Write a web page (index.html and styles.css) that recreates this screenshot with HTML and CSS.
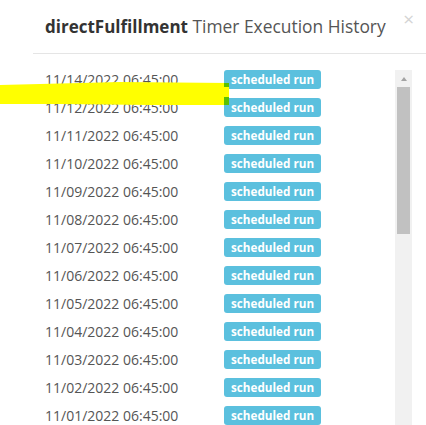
FILE: index.html
```html
<!DOCTYPE html>
<html lang="en">
<head>
    <meta charset="UTF-8">
    <meta name="viewport" content="width=device-width, initial-scale=1.0">
    <title>Timer Execution History</title>
    <link rel="stylesheet" href="styles.css">
</head>
<body>

    <div class="modal">
        <div class="modal-header">
            <h4 class="modal-title"><strong>directFulfillment</strong> Timer Execution History</h4>
            <span class="close">&times;</span>
        </div>

        <div class="modal-body">
            <div class="history">
                <div class="row"><span class="run-date">11/14/2022 06:45:00</span><span class="label">scheduled run</span></div>
                <div class="row"><span class="run-date">11/12/2022 06:45:00</span><span class="label">scheduled run</span></div>
                <div class="row"><span class="run-date">11/11/2022 06:45:00</span><span class="label">scheduled run</span></div>
                <div class="row"><span class="run-date">11/10/2022 06:45:00</span><span class="label">scheduled run</span></div>
                <div class="row"><span class="run-date">11/09/2022 06:45:00</span><span class="label">scheduled run</span></div>
                <div class="row"><span class="run-date">11/08/2022 06:45:00</span><span class="label">scheduled run</span></div>
                <div class="row"><span class="run-date">11/07/2022 06:45:00</span><span class="label">scheduled run</span></div>
                <div class="row"><span class="run-date">11/06/2022 06:45:00</span><span class="label">scheduled run</span></div>
                <div class="row"><span class="run-date">11/05/2022 06:45:00</span><span class="label">scheduled run</span></div>
                <div class="row"><span class="run-date">11/04/2022 06:45:00</span><span class="label">scheduled run</span></div>
                <div class="row"><span class="run-date">11/03/2022 06:45:00</span><span class="label">scheduled run</span></div>
                <div class="row"><span class="run-date">11/02/2022 06:45:00</span><span class="label">scheduled run</span></div>
                <div class="row"><span class="run-date">11/01/2022 06:45:00</span><span class="label">scheduled run</span></div>
            </div>
            <div class="scrollbar">
                <div class="scroll-up"><span class="arrow"></span></div>
                <div class="scroll-thumb"></div>
            </div>
        </div>
    </div>

    <!-- highlighter mark over the screenshot -->
    <svg class="marker" width="232" height="110" viewBox="0 0 232 110">
        <polygon points="0,85 40,84 120,82 229,83 229,105 150,105 60,104 0,104" fill="#ffff00"/>
        <rect x="224" y="83" width="5" height="4" fill="#5bc000"/>
        <rect x="224" y="97" width="5" height="8" fill="#5bc000"/>
    </svg>

</body>
</html>
```

FILE: styles.css
```css
:root {
    --text-color: #555;
    --title-color: #333;
    --border-color: #e5e5e5;
    --label-color: #5bc0de;
}
body {
    font-family: "Open Sans", "Liberation Sans", Arial, sans-serif;
    background-color: #fff;
    color: var(--text-color);
    margin: 0;
    height: 425px;
    overflow: hidden;
    position: relative;
}
.modal {
    margin-left: 33px;
}
.modal-header {
    display: flex;
    justify-content: space-between;
    padding: 16px 12px 16px 12px;
    border-bottom: 1px solid var(--border-color);
}
.modal-title {
    margin: 0;
    font-size: 17.4px;
    font-weight: 400;
    line-height: 20px;
    white-space: nowrap;
    color: #555;
}
.modal-title strong {
    font-size: 17px;
    color: var(--title-color);
    font-weight: 700;
}
.close {
    align-self: flex-start;
    margin-top: -6px;
    font-size: 19px;
    line-height: 1;
    color: #d4d4d4;
}
.modal-body {
    display: flex;
    padding: 16px 14px 0 12px;
}
.history {
    flex: 1;
}
.row {
    display: flex;
    align-items: center;
    height: 19px;
    padding-bottom: 9px;
}
.run-date {
    width: 179px;
    font-size: 14px;
    line-height: 19px;
}
.label {
    display: inline-block;
    height: 19px;
    padding: 0 7px;
    line-height: 18px;
    font-size: 11.7px;
    font-weight: 700;
    color: #fff;
    background-color: var(--label-color);
    border-radius: 3px;
}
.scrollbar {
    width: 17px;
    background-color: #f1f1f1;
    display: flex;
    flex-direction: column;
}
.scroll-up {
    height: 17px;
    display: flex;
    align-items: center;
    justify-content: center;
}
.arrow {
    width: 0;
    height: 0;
    border-left: 3.5px solid transparent;
    border-right: 3.5px solid transparent;
    border-bottom: 4px solid #a3a3a3;
}
.scroll-thumb {
    height: 147px;
    margin: 0 2px;
    background-color: #c1c1c1;
}
.marker {
    position: absolute;
    top: 0;
    left: 0;
}
```
